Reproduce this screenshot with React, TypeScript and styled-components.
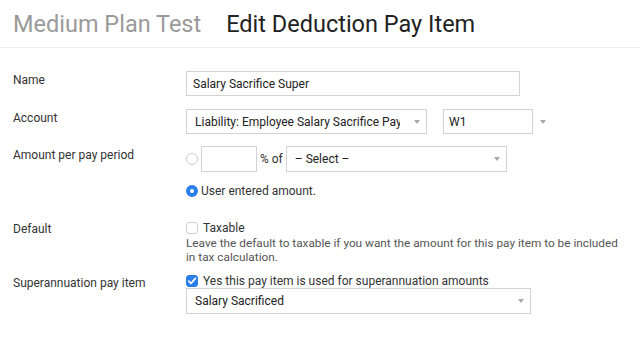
import React from 'react';
import styled, { createGlobalStyle } from 'styled-components';

const GlobalStyle = createGlobalStyle`
  body {
    margin: 0;
    background: #fff;
    font-family: Roboto, 'Liberation Sans', sans-serif;
    color: #333;
  }
`;

const App: React.FC = () => (
  <>
    <GlobalStyle />
    <StyledHeader>
      <StyledCrumb>Medium Plan Test</StyledCrumb>
      <StyledTitle>Edit Deduction Pay Item</StyledTitle>
    </StyledHeader>
    <StyledForm>
      <StyledRow $space={13}>
        <StyledLabel>Name</StyledLabel>
        <StyledField>
          <StyledBox $width={334}>Salary Sacrifice Super</StyledBox>
        </StyledField>
      </StyledRow>

      <StyledRow $space={12}>
        <StyledLabel>Account</StyledLabel>
        <StyledInline>
          <StyledSelect $width={241}>
            <StyledSelectText>Liability: Employee Salary Sacrifice Payable</StyledSelectText>
            <StyledArrow />
          </StyledSelect>
          <StyledBox $width={90} $pad={5} $ml={16}>W1</StyledBox>
          <StyledArrow $outside />
        </StyledInline>
      </StyledRow>

      <StyledRow $space={21}>
        <StyledLabel>Amount per pay period</StyledLabel>
        <StyledField>
          <StyledInline>
            <StyledRadio />
            <StyledBox $width={56} $height={26} $ml={3} />
            <StyledOf>% of</StyledOf>
            <StyledSelect $width={221} $height={26}>
              <StyledSelectText>– Select –</StyledSelectText>
              <StyledArrow />
            </StyledSelect>
          </StyledInline>
          <StyledCheckLine $mt={11}>
            <StyledRadio $checked />
            <StyledOptionText $gap={3}>User entered amount.</StyledOptionText>
          </StyledCheckLine>
        </StyledField>
      </StyledRow>

      <StyledRow $space={10}>
        <StyledLabel>Default</StyledLabel>
        <StyledField>
          <StyledCheckLine>
            <StyledCheckbox />
            <StyledOptionText>Taxable</StyledOptionText>
          </StyledCheckLine>
          <StyledHelp>
            Leave the default to taxable if you want the amount for this pay item to be included in tax calculation.
          </StyledHelp>
        </StyledField>
      </StyledRow>

      <StyledRow $space={0}>
        <StyledLabel>Superannuation pay item</StyledLabel>
        <StyledField>
          <StyledCheckLine $height={14}>
            <StyledCheckbox $checked>
              <svg width="10" height="10" viewBox="0 0 10 10">
                <path d="M1.8 5.2 L4 7.4 L8.4 2.4" fill="none" stroke="#fff" strokeWidth="1.7" strokeLinecap="round" strokeLinejoin="round" />
              </svg>
            </StyledCheckbox>
            <StyledOptionText>Yes this pay item is used for superannuation amounts</StyledOptionText>
          </StyledCheckLine>
          <StyledSelect $width={345} $height={26}>
            <StyledSelectText>Salary Sacrificed</StyledSelectText>
            <StyledArrow />
          </StyledSelect>
        </StyledField>
      </StyledRow>
    </StyledForm>
  </>
);

const StyledHeader = styled.header`
  height: 48px;
  border-bottom: 1px solid #eeeeee;
  display: flex;
  align-items: flex-start;
  padding: 10px 0 0 13px;
  box-sizing: border-box;
  font-size: 23.5px;
  line-height: 28px;
`;

const StyledCrumb = styled.span`
  color: #9a9a9a;
  margin-right: 25px;
`;

const StyledTitle = styled.span`
  color: #222;
`;

const StyledForm = styled.div`
  padding: 23px 0 0 13px;
`;

const StyledRow = styled.div<{ $space: number }>`
  display: grid;
  grid-template-columns: 173px 1fr;
  margin-bottom: ${({ $space }) => $space}px;
`;

const StyledLabel = styled.div`
  padding-top: 2px;
  font-size: 12px;
  line-height: 15px;
  color: #333;
`;

const StyledField = styled.div`
  display: flex;
  flex-direction: column;
  align-items: flex-start;
`;

const StyledInline = styled.div`
  display: flex;
  align-items: center;
`;

const StyledBox = styled.div<{ $width: number; $height?: number; $pad?: number; $ml?: number }>`
  box-sizing: border-box;
  width: ${({ $width }) => $width}px;
  height: ${({ $height }) => $height ?? 25}px;
  margin-left: ${({ $ml }) => $ml ?? 0}px;
  padding: 0 ${({ $pad }) => $pad ?? 6}px;
  border: 1px solid #d3d3d3;
  background: #fff;
  display: flex;
  align-items: center;
  font-size: 12px;
  color: #222;
`;

const StyledSelect = styled.div<{ $width: number; $height?: number }>`
  box-sizing: border-box;
  width: ${({ $width }) => $width}px;
  height: ${({ $height }) => $height ?? 25}px;
  padding: 0 6px 0 8px;
  border: 1px solid #d3d3d3;
  background: #fff;
  display: flex;
  align-items: center;
  font-size: 12px;
  color: #222;
`;

const StyledSelectText = styled.span`
  flex: 1;
  white-space: nowrap;
  overflow: hidden;
`;

const StyledArrow = styled.span<{ $outside?: boolean }>`
  width: 0;
  height: 0;
  border-left: 3.5px solid transparent;
  border-right: 3.5px solid transparent;
  border-top: 4px solid #a8a8a8;
  margin-left: ${({ $outside }) => ($outside ? 7 : 14)}px;
  flex-shrink: 0;
`;

const StyledOf = styled.span`
  font-size: 12px;
  color: #333;
  margin: 0 3px 0 3px;
`;

const StyledRadio = styled.span<{ $checked?: boolean }>`
  box-sizing: border-box;
  width: 12px;
  height: 12px;
  border-radius: 50%;
  flex-shrink: 0;
  background: #fff;
  border: ${({ $checked }) => ($checked ? '4px solid #2b7de9' : '1px solid #d0d0d0')};
`;

const StyledCheckbox = styled.span<{ $checked?: boolean }>`
  box-sizing: border-box;
  width: 12px;
  height: 12px;
  border-radius: 3px;
  flex-shrink: 0;
  display: flex;
  align-items: center;
  justify-content: center;
  background: ${({ $checked }) => ($checked ? '#2b7de9' : '#fff')};
  border: 1px solid ${({ $checked }) => ($checked ? '#2b7de9' : '#cfcfcf')};
`;

const StyledCheckLine = styled.div<{ $mt?: number; $height?: number }>`
  display: flex;
  align-items: center;
  height: ${({ $height }) => $height ?? 16}px;
  margin-top: ${({ $mt }) => $mt ?? 0}px;
`;

const StyledOptionText = styled.span<{ $gap?: number }>`
  font-size: 12px;
  color: #333;
  margin-left: ${({ $gap }) => $gap ?? 5}px;
`;

const StyledHelp = styled.div`
  font-size: 11.8px;
  line-height: 14px;
  color: #555;
  width: 440px;
`;

export default App;
